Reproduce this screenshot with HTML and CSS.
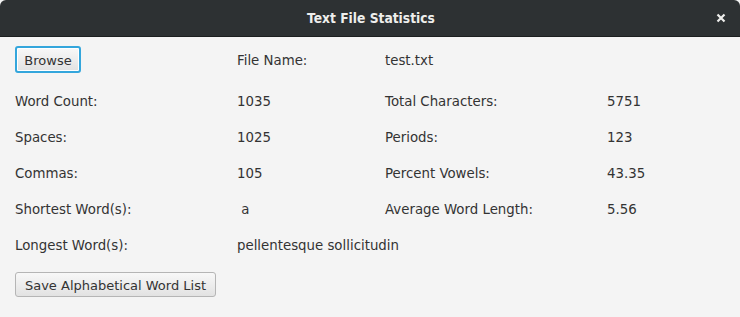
FILE: index.html
```html
<!DOCTYPE html>
<html>
<head>
<meta charset="utf-8">
<link rel="stylesheet" href="styles.css">
</head>
<body>
<div class="window">
  <div class="titlebar">
    <span class="title">Text File Statistics</span>
    <svg class="close" width="10" height="10" viewBox="0 0 10 10"><path d="M1.5 1.5 L8.5 8.5 M8.5 1.5 L1.5 8.5" stroke="#eeeeec" stroke-width="2.2" stroke-linecap="butt"/></svg>
  </div>
  <div class="content">
    <div class="cell"><button class="btn focused">Browse</button></div>
    <div class="cell text">File Name:</div>
    <div class="cell text span2">test.txt</div>

    <div class="cell text">Word Count:</div>
    <div class="cell text">1035</div>
    <div class="cell text">Total Characters:</div>
    <div class="cell text">5751</div>

    <div class="cell text">Spaces:</div>
    <div class="cell text">1025</div>
    <div class="cell text">Periods:</div>
    <div class="cell text">123</div>

    <div class="cell text">Commas:</div>
    <div class="cell text">105</div>
    <div class="cell text">Percent Vowels:</div>
    <div class="cell text">43.35</div>

    <div class="cell text">Shortest Word(s):</div>
    <div class="cell text pre"> a</div>
    <div class="cell text">Average Word Length:</div>
    <div class="cell text">5.56</div>

    <div class="cell text">Longest Word(s):</div>
    <div class="cell text span3">pellentesque sollicitudin</div>

    <div class="cell span4"><button class="btn save">Save Alphabetical Word List</button></div>
  </div>
</div>
</body>
</html>
```
FILE: styles.css
```css
html, body {
  margin: 0;
  padding: 0;
  background: #f4f4f4;
}
.window {
  width: 740px;
  height: 317px;
  background: #f4f4f4;
  font-family: "DejaVu Sans", sans-serif;
  font-size: 13.33px;
  color: #333333;
}
.titlebar {
  height: 36px;
  background: #2d3133;
  border-bottom: 1px solid #1c1f20;
  border-radius: 6px 6px 0 0;
  position: relative;
  display: flex;
  align-items: center;
  justify-content: center;
}
.title {
  font-family: "DejaVu Sans Condensed", "DejaVu Sans", sans-serif;
  font-weight: bold;
  font-size: 13.7px;
  color: #eeeeec;
  padding-left: 2px;
}
.close {
  position: absolute;
  right: 14px;
  top: 13px;
}
.content {
  display: grid;
  grid-template-columns: 222px 148px 222px 1fr;
  grid-template-rows: 27px 17px 17px 17px 17px 17px 25px;
  row-gap: 19px;
  padding: 9px 15px 0 15px;
}
.cell {
  line-height: 17px;
  display: flex;
  align-items: center;
  white-space: nowrap;
}
.text {
  align-self: center;
  padding-top: 1px;
  height: 17px;
}
.pre { white-space: pre; }
.span2 { grid-column: span 2; }
.span3 { grid-column: span 3; }
.span4 { grid-column: span 4; }
.btn {
  font-family: "DejaVu Sans", sans-serif;
  font-size: 13px;
  color: #333333;
  background: linear-gradient(#f8f8f8, #e2e2e2);
  border: 1px solid #b5b5b5;
  border-radius: 3px;
  padding: 0 8px;
  margin: 0;
}
.btn.focused {
  height: 27px;
  width: 66px;
  padding: 1px 0 0 0;
  border: 2px solid #34a6dc;
  box-shadow: inset 0 0 0 1px #ffffff;
}
.btn.save {
  height: 25px;
  width: 201px;
  padding: 1px 0 0 0;
}
```
